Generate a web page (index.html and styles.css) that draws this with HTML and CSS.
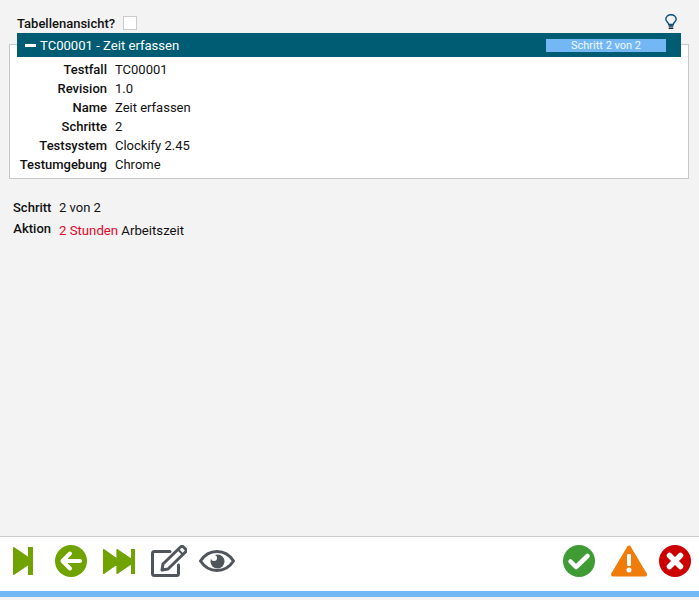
FILE: index.html
```html
<!DOCTYPE html>
<html lang="de">
<head>
<meta charset="utf-8">
<title>Testfall</title>
<link rel="stylesheet" href="styles.css">
</head>
<body>
<main class="content">
  <div class="toolbar">
    <span class="toolbar-label">Tabellenansicht?</span>
    <span class="checkbox"></span>
    <svg class="bulb" width="12" height="16" viewBox="0 0 12 16" fill="none"><path d="M3.700 10.500C3.700 8.500 .8 7.500 .8 5.200a5.200 4.500 0 0 1 10.400 0c0 2.300-2.900 3.300-2.900 5.300z" stroke="#0a4f80" stroke-width="1.400"/><path d="M3.700 12h4.600M3.700 14.200h4.600" stroke="#14283c" stroke-width="1.500"/></svg>
  </div>
  <section class="panel">
    <header class="panel-head">
      <span class="dash"></span>
      <span class="panel-title">TC00001 - Zeit erfassen</span>
      <span class="progress">Schritt 2 von 2</span>
    </header>
    <dl class="meta">
      <div class="row"><dt>Testfall</dt><dd>TC00001</dd></div>
      <div class="row"><dt>Revision</dt><dd>1.0</dd></div>
      <div class="row"><dt>Name</dt><dd>Zeit erfassen</dd></div>
      <div class="row"><dt>Schritte</dt><dd>2</dd></div>
      <div class="row"><dt>Testsystem</dt><dd>Clockify 2.45</dd></div>
      <div class="row"><dt>Testumgebung</dt><dd>Chrome</dd></div>
    </dl>
  </section>
  <div class="step">
    <div class="step-row"><span class="step-label">Schritt</span><span>2 von 2</span></div>
    <div class="step-row action"><span class="step-label">Aktion</span><span class="action-text"><span class="red">2 Stunden</span> Arbeitszeit</span></div>
  </div>
</main>
<footer class="actions">
  <div class="group">
    <svg class="ic" width="20" height="28" viewBox="0 0 20 28"><path d="M.8.800L15.500 11v6L.8 27.200z" fill="#70a300" stroke="#70a300" stroke-width="1.600" stroke-linejoin="round"/><rect x="15" width="5" height="28" fill="#70a300"/></svg>
    <svg class="ic gap1" width="32" height="32" viewBox="0 0 32 32"><circle cx="16" cy="16" r="16" fill="#70a300"/><path d="M15 8.500l-7.500 7.500 7.500 7.500M8 16h17" fill="none" stroke="#fff" stroke-width="4" stroke-linecap="round" stroke-linejoin="round"/></svg>
    <svg class="ic gap2" width="32" height="25" viewBox="0 0 32 25"><path d="M.6.600L14 10V.6L28 10v5L14 24.400V15L.6 24.400z" fill="#70a300" stroke="#70a300" stroke-width="1.200" stroke-linejoin="round"/><rect x="28" width="4" height="25" fill="#70a300"/></svg>
    <svg class="ic gap2" width="36" height="32" viewBox="0 0 36 32"><path d="M19 6.500H3.500a2 2 0 0 0-2 2V28.500a2 2 0 0 0 2 2H25.500a2 2 0 0 0 2-2V20" fill="none" stroke="#50555c" stroke-width="3" stroke-linecap="round"/><path d="M11 25l1-6L29.500 2a2 2 0 0 1 3 0l2 2a2 2 0 0 1 0 3L17 24z" fill="#fff" stroke="#50555c" stroke-width="3" stroke-linejoin="round"/><path d="M27 4.500l4.500 4.500" stroke="#50555c" stroke-width="2"/></svg>
    <svg class="ic gap4" width="36" height="22" viewBox="0 0 36 22"><path d="M1.500 11C6 4 12 1.500 18 1.500S30 4 34.500 11C30 18 24 20.500 18 20.500S6 18 1.500 11z" fill="#fff" stroke="#50555c" stroke-width="3" stroke-linejoin="round"/><circle cx="18.500" cy="11.500" r="7" fill="#50555c"/><circle cx="15" cy="8" r="3" fill="#fff"/></svg>
  </div>
  <div class="group">
    <svg class="ic" width="32" height="32" viewBox="0 0 32 32"><circle cx="16" cy="16" r="16" fill="#3f9c35"/><path d="M7.500 16.500l5.500 5.500L24.500 11" fill="none" stroke="#fff" stroke-width="4.500" stroke-linecap="round" stroke-linejoin="round"/></svg>
    <svg class="ic gap5" width="36" height="32" viewBox="0 0 36 32"><path d="M18 2.500L34 29.500H2z" fill="#f07c0a" stroke="#f07c0a" stroke-width="4" stroke-linejoin="round"/><rect x="16" y="9" width="4" height="12" rx="1" fill="#fff"/><circle cx="18" cy="25" r="2.500" fill="#fff"/></svg>
    <svg class="ic gap6" width="32" height="32" viewBox="0 0 32 32"><circle cx="16" cy="16" r="16" fill="#cc0000"/><path d="M10.500 10.500l11 11M21.500 10.500l-11 11" fill="none" stroke="#fff" stroke-width="5.500" stroke-linecap="round"/></svg>
  </div>
</footer>
<div class="bottom-bar"></div>
</body>
</html>
```
FILE: styles.css
```css
* { box-sizing: border-box; }
html, body { height: 100%; margin: 0; }
body {
  display: flex;
  flex-direction: column;
  height: 597px;
  background: #f3f3f3;
  font-family: Roboto, "Liberation Sans", sans-serif;
  font-size: 13px;
  color: #111;
  overflow: hidden;
}
.content { flex: 1; padding: 13px 10px 0 9px; }
.toolbar { display: flex; align-items: center; height: 20px; padding-left: 8px; }
.toolbar-label { font-weight: 500; }
.checkbox { width: 14px; height: 14px; margin-left: 8px; background: #fff; border: 1px solid #ccc; }
.bulb { margin-left: auto; margin-right: 12px; margin-top: -2px; }
.panel { background: #fff; border: 1px solid #c8c8c8; margin-top: 11px; height: 135px; }
.panel-head {
  display: flex;
  align-items: center;
  height: 24px;
  margin: -12px 7px 0 7px;
  padding: 0 15px 0 8px;
  background: #005c73;
  color: #fff;
}
.dash { width: 11px; height: 3px; background: #fff; margin-right: 4px; }
.panel-title { font-size: 13.1px; }
.progress {
  margin-left: auto;
  width: 120px;
  height: 13px;
  line-height: 13px;
  background: #73b8f5;
  font-size: 11px;
  text-align: center;
  color: #f1f7fd;
}
.meta { margin: 3px 0 0; }
.row { display: flex; height: 19px; align-items: center; }
.row dt { width: 97px; text-align: right; font-weight: 500; }
.row dd { margin: 0 0 0 8px; }
.step { padding: 18px 0 0 4px; }
.step-row { display: flex; height: 20px; align-items: center; }
.step-label { width: 38px; text-align: right; font-weight: 500; margin-right: 8px; }
.action { height: 22px; }
.action-text { padding-top: 4px; font-size: 13.2px; }
.red { color: #e6062a; }
.actions {
  display: flex;
  justify-content: space-between;
  align-items: center;
  height: 55px;
  padding: 0 8px 6px 13px;
  background: #fff;
  border-top: 1px solid #ccc;
}
.group { display: flex; align-items: center; }
.gap1 { margin-left: 22px; }
.gap2 { margin-left: 16px; }
.gap4 { margin-left: 12px; }
.gap5 { margin-left: 16px; }
.gap6 { margin-left: 12px; }
.bottom-bar { height: 6px; background: #73b8f5; }
```
